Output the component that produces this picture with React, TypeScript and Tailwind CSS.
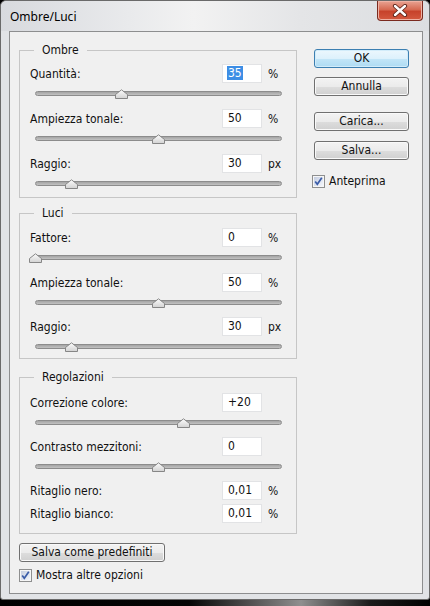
import { useId } from "react";

type RowProps = {
  label: string;
  value: string;
  unit?: string;
  selected?: boolean;
};

function ValueRow({ label, value, unit, selected }: RowProps) {
  return (
    <div className="flex h-[19px] items-center">
      <span className="flex-1">{label}</span>
      <div className="h-[19px] w-[40px] border border-[#e2e3e5] bg-white pl-[4px] leading-[17px]">
        {selected ? (
          <span className="bg-[#3d8ee5] px-[1px] text-white">{value}</span>
        ) : (
          <span className="px-[1px]">{value}</span>
        )}
      </div>
      <span className="w-[20px] pl-[6px]">{unit}</span>
    </div>
  );
}

// horizontal track with the little house-shaped thumb
function Slider({ frac, h = 26 }: { frac: number; h?: number }) {
  const id = useId();
  const left = Math.round(frac * 246) - 6;
  return (
    <div className="relative ml-[5px]" style={{ height: h }}>
      <div className="absolute left-0 right-0 top-[8px] h-[5px] rounded-full border border-[#8c8c8c] bg-[linear-gradient(to_bottom,#a4a4a4,#c2c2c2)]" />
      <svg
        className="absolute top-[6px]"
        style={{ left }}
        width="13"
        height="10"
        viewBox="0 0 13 10"
      >
        <defs>
          <linearGradient id={id} x1="0" y1="0" x2="0" y2="1">
            <stop offset="0" stopColor="#fdfdfd" />
            <stop offset="1" stopColor="#d2d2d2" />
          </linearGradient>
        </defs>
        <path
          d="M0.5 9.5 V5.5 L6.5 0.8 L12.5 5.5 V9.5 Z"
          fill={`url(#${id})`}
          stroke="#868686"
          strokeLinejoin="round"
        />
      </svg>
    </div>
  );
}

function Group({
  title,
  className,
  children,
}: {
  title: string;
  className?: string;
  children: React.ReactNode;
}) {
  return (
    <fieldset className={`border border-[#c6c6c6] pl-[10px] pr-[14px] ${className ?? ""}`}>
      <legend className="ml-[4px] px-[8px] leading-[14px]">{title}</legend>
      {children}
    </fieldset>
  );
}

function Button({ children, primary }: { children: React.ReactNode; primary?: boolean }) {
  return (
    <div
      className={
        primary
          ? "h-[19px] rounded-[3px] border border-[#3c7fb1] bg-[linear-gradient(to_bottom,#ecf7fd_0%,#ddf1fc_50%,#c3e6f8_51%,#aedbf3_100%)] text-center leading-[17px] shadow-[inset_0_0_0_1px_#d2ecfa]"
          : "h-[19px] rounded-[3px] border border-[#707070] bg-[linear-gradient(to_bottom,#f3f3f3_0%,#ebebeb_50%,#dddddd_51%,#d0d0d0_100%)] text-center leading-[17px] shadow-[inset_0_0_0_1px_#f9f9f9]"
      }
    >
      {children}
    </div>
  );
}

function CheckBox({ label }: { label: string }) {
  const id = useId();
  return (
    <div className="flex h-[13px] items-center gap-[4px]">
      <svg width="13" height="13" viewBox="0 0 13 13">
        <defs>
          <linearGradient id={id} x1="0" y1="0" x2="1" y2="1">
            <stop offset="0" stopColor="#c4cde0" />
            <stop offset="1" stopColor="#f4f6fb" />
          </linearGradient>
        </defs>
        <rect x="0.5" y="0.5" width="12" height="12" fill="#f6f6f6" stroke="#8e8f8f" />
        <rect x="2" y="2" width="9" height="9" fill={`url(#${id})`} />
        <path d="M3.2 6.4 L5.3 9.2 L9.8 2.8" fill="none" stroke="#3a5ca8" strokeWidth="1.7" />
      </svg>
      <span className="leading-[13px]">{label}</span>
    </div>
  );
}

function CloseButton() {
  return (
    <div className="flex h-[20px] w-[46px] items-center justify-center rounded-b-[4px] border border-t-0 border-[#7a2a1f] bg-[linear-gradient(to_bottom,#e9a493_0%,#d66a52_45%,#c7432b_55%,#d4593f_100%)] shadow-[inset_0_0_0_1px_#efb2a4]">
      <svg width="16" height="13" viewBox="0 0 16 13">
        <path d="M3 2 L13 11 M13 2 L3 11" stroke="#5c2318" strokeWidth="4.2" strokeLinecap="round" />
        <path d="M3 2 L13 11 M13 2 L3 11" stroke="#ffffff" strokeWidth="2.4" strokeLinecap="round" />
      </svg>
    </div>
  );
}

export default function App() {
  return (
    <div className="h-[606px] w-[430px] bg-[linear-gradient(to_right,#000_0%,#050505_44%,#8f8f8f_70%,#1c1c1c_86%,#000_100%)] font-['DejaVu_Sans_Condensed','DejaVu_Sans',sans-serif] text-[12px] text-[#111]">
      <div className="flex h-[600px] flex-col rounded-t-[6px] rounded-b-[3px] border border-[#6a6a6a] bg-[#e1e3e6]">
        {/* title bar */}
        <div className="flex h-[30px] items-start justify-between rounded-t-[6px] bg-[linear-gradient(to_right,#d8dade_0%,#e9eaec_30%,#f2f2f2_45%,#e4e5e7_70%,#dcdee1_100%)] pl-[9px] pr-[6px]">
          <span className="mt-[7px] font-['Noto_Sans',sans-serif] text-[12px] text-black">
            Ombre/Luci
          </span>
          <CloseButton />
        </div>

        {/* client area */}
        <div className="mb-[5px] ml-[8px] mr-[6px] flex flex-1 gap-[17px] border border-[#8d8e8f] bg-[#f0f0f0] pl-[9px] pr-[13px] pt-[11px]">
          <div className="flex w-[278px] flex-col">
            <Group title="Ombre" className="pt-[7px]">
              <ValueRow label="Quantità:" value="35" unit="%" selected />
              <Slider frac={0.35} />
              <ValueRow label="Ampiezza tonale:" value="50" unit="%" />
              <Slider frac={0.5} />
              <ValueRow label="Raggio:" value="30" unit="px" />
              <Slider frac={0.146} h={24} />
            </Group>

            <Group title="Luci" className="mt-[8px] pt-[8px]">
              <ValueRow label="Fattore:" value="0" unit="%" />
              <Slider frac={0} />
              <ValueRow label="Ampiezza tonale:" value="50" unit="%" />
              <Slider frac={0.5} h={25} />
              <ValueRow label="Raggio:" value="30" unit="px" />
              <Slider frac={0.146} h={22} />
            </Group>

            <Group title="Regolazioni" className="mt-[11px] pb-[10px] pt-[9px]">
              <ValueRow label="Correzione colore:" value="+20" />
              <Slider frac={0.6} h={25} />
              <ValueRow label="Contrasto mezzitoni:" value="0" />
              <Slider frac={0.5} h={25} />
              <ValueRow label="Ritaglio nero:" value="0,01" unit="%" />
              <div className="h-[4px]" />
              <ValueRow label="Ritaglio bianco:" value="0,01" unit="%" />
            </Group>

            <div className="mt-[9px] w-[146px]">
              <Button>Salva come predefiniti</Button>
            </div>
            <div className="mt-[7px]">
              <CheckBox label="Mostra altre opzioni" />
            </div>
          </div>

          <div className="flex w-[95px] flex-col pt-[6px]">
            <Button primary>OK</Button>
            <div className="mt-[9px]">
              <Button>Annulla</Button>
            </div>
            <div className="mt-[16px]">
              <Button>Carica...</Button>
            </div>
            <div className="mt-[10px]">
              <Button>Salva...</Button>
            </div>
            <div className="-ml-[2px] mt-[15px]">
              <CheckBox label="Anteprima" />
            </div>
          </div>
        </div>
      </div>
    </div>
  );
}
